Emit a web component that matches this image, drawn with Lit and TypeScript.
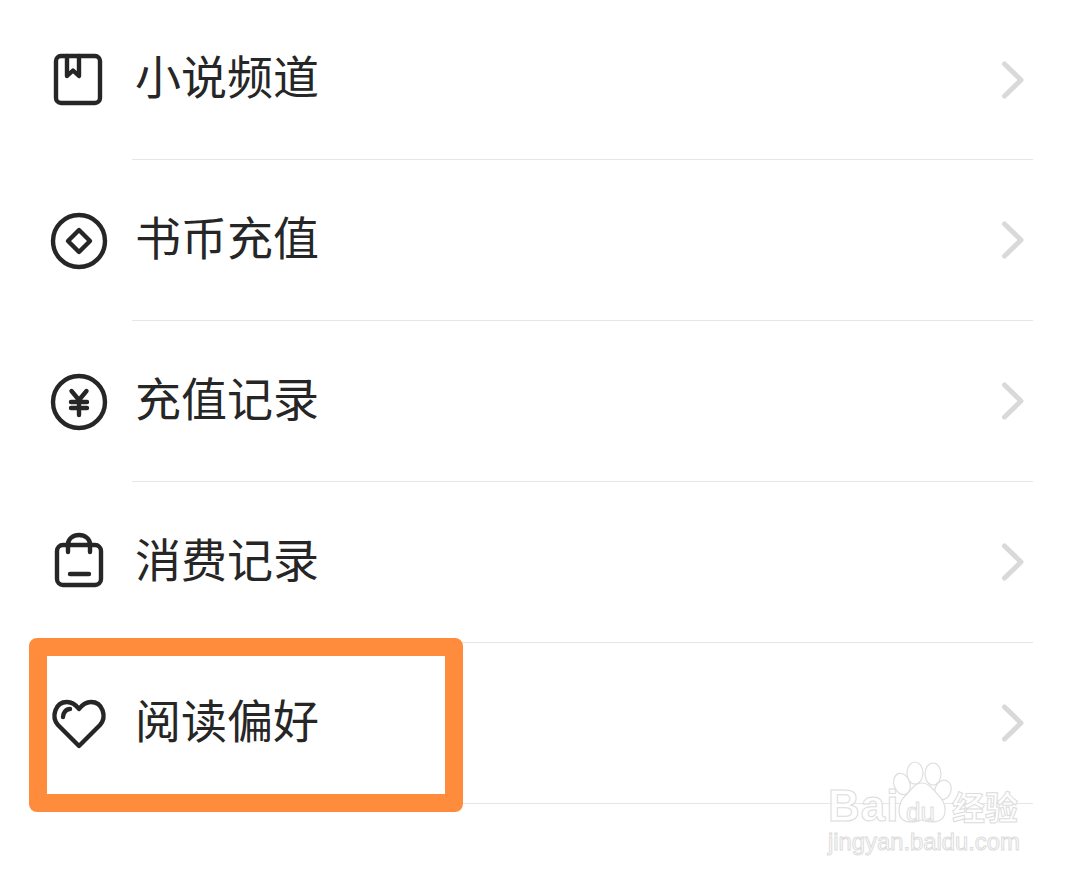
import { LitElement, html, css, svg } from "lit";
import { customElement } from "lit/decorators.js";

const icons: Record<string, unknown> = {
  book: svg`<rect x="10" y="11" width="44" height="47" rx="5"/><path d="M21 11v20l6-5.500 6 5.500V11"/>`,
  coin: svg`<circle cx="33" cy="36" r="26"/><path d="M33 25 44 36 33 47 22 36Z"/>`,
  yen: svg`<circle cx="33" cy="36" r="26"/><path d="M25.500 25 33 34l7.500-9M25 36h16M25 42h16M33 34v15"/>`,
  bag: svg`<rect x="11" y="18" width="44" height="40" rx="6"/><path d="M22 25v-8a11 9 0 0 1 22 0v8M24 47h19"/>`,
  heart: svg`<path d="M33 58 12 37C5 29 9 14 21 14c5 0 9 3 12 7 3-4 7-7 12-7 12 0 16 15 9 23Z"/><path d="M17 29c0-4 3-8 7-8"/>`,
};

const rows = [
  { icon: "book", label: "小说频道" },
  { icon: "coin", label: "书币充值" },
  { icon: "yen", label: "充值记录" },
  { icon: "bag", label: "消费记录" },
  { icon: "heart", label: "阅读偏好" },
];

@customElement("app-root")
export class AppRoot extends LitElement {
  static styles = css`
    :host {
      display: block;
      position: relative;
      width: 1080px;
      height: 877px;
      overflow: hidden;
      background: #fff;
      font-family: "Noto Sans CJK SC", "Noto Sans", sans-serif;
    }
    .list {
      display: flex;
      flex-direction: column;
      padding-left: 132px;
      padding-right: 47px;
    }
    .row {
      position: relative;
      height: 160px;
      display: flex;
      align-items: center;
      border-bottom: 1px solid #e6e6e6;
    }
    .row:first-child {
      height: 159px;
    }
    .icon {
      position: absolute;
      left: -86px;
      top: 45px;
      width: 66px;
      height: 68px;
      fill: none;
      stroke: #262626;
      stroke-width: 4.4;
      stroke-linecap: round;
      stroke-linejoin: round;
    }
    .label {
      margin-left: 3px;
      margin-top: -11px;
      font-size: 46px;
      line-height: 60px;
      color: #262626;
      flex: 1;
    }
    .chev {
      width: 24px;
      height: 38px;
      margin-right: 8px;
      fill: none;
      stroke: #d9d9d9;
      stroke-width: 5;
      stroke-linecap: round;
      stroke-linejoin: round;
    }
    .highlight {
      position: absolute;
      left: 29px;
      top: 638px;
      width: 434px;
      height: 174px;
      box-sizing: border-box;
      border: 18px solid #ff8c3c;
      border-radius: 8px;
    }
    .wm {
      position: absolute;
      font-family: "Liberation Sans", sans-serif;
      color: rgba(255, 255, 255, 0.85);
      -webkit-text-stroke: 1px #dcdcdc;
    }
    .wm-bai {
      left: 828px;
      top: 781px;
      font-size: 44px;
      line-height: 50px;
      font-weight: 700;
      letter-spacing: 1px;
    }
    .wm-du {
      left: 906px;
      top: 797px;
      font-size: 26px;
      line-height: 30px;
      -webkit-text-stroke: 1px #dedede;
    }
    .wm-cn {
      left: 952px;
      top: 786px;
      font-family: "Noto Sans CJK SC", sans-serif;
      font-size: 33px;
      line-height: 40px;
      font-weight: 700;
    }
    .wm-url {
      left: 828px;
      top: 828px;
      font-size: 23.800px;
      line-height: 28px;
    }
    .paw {
      position: absolute;
      left: 890px;
      top: 758px;
      width: 66px;
      height: 66px;
      fill: #fff;
      stroke: #dedede;
      stroke-width: 1.2;
    }
  `;

  render() {
    return html`
      <div class="list">
        ${rows.map(
          (r) => html`<div class="row">
            <svg class="icon" viewBox="0 0 66 68">${icons[r.icon]}</svg>
            <span class="label">${r.label}</span>
            <svg class="chev" viewBox="0 0 24 38"><path d="M3.500 3 20 19 3.500 35"/></svg>
          </div>`
        )}
      </div>
      <svg class="paw" viewBox="0 0 66 66">
        <ellipse cx="12" cy="26" rx="8" ry="11" transform="rotate(-20 12 26)"/>
        <ellipse cx="25" cy="15" rx="8" ry="11"/>
        <ellipse cx="43" cy="16" rx="8" ry="11"/>
        <ellipse cx="53" cy="32" rx="8" ry="10" transform="rotate(20 53 32)"/>
        <path d="M32 25c8 0 11 7 17 13 7 6 12 26-8 26-4 0-6-2-9-2s-6 2-11 2C4 64 8 44 15 38c6-5 9-13 17-13Z"/>
      </svg>
      <span class="wm wm-bai">Bai</span>
      <span class="wm wm-du">du</span>
      <span class="wm wm-cn">经验</span>
      <span class="wm wm-url">jingyan.baidu.com</span>
      <div class="highlight"></div>
    `;
  }
}
